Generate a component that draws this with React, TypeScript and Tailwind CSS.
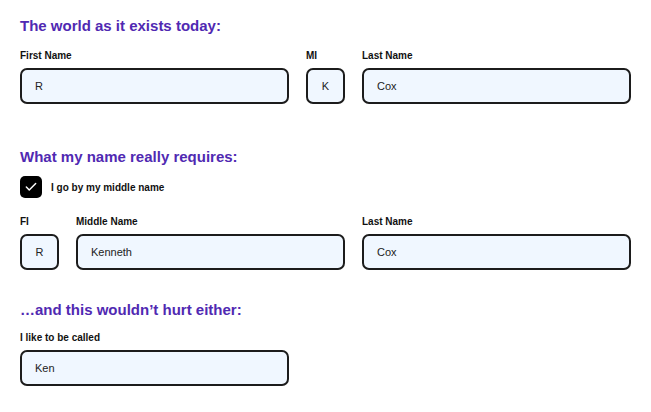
import { Check } from "lucide-react";

const font = { fontFamily: '"Liberation Sans", Arial, sans-serif' };

function Field({ label, value, className = "" }: { label: string; value: string; className?: string }) {
  return (
    <div className={`flex flex-col ${className}`}>
      <label className="text-[10px] leading-[12px] font-bold text-[#111]">{label}</label>
      <div className="mt-[6px] h-[36px] flex items-center rounded-[7px] border-2 border-[#1c1c1c] bg-[#f0f7ff] px-[13px] text-[11px] text-[#222]">
        {value}
      </div>
    </div>
  );
}

function Heading({ children, className = "" }: { children: React.ReactNode; className?: string }) {
  return <h2 className={`text-[15px] leading-[20px] font-bold text-[#5029b2] ${className}`}>{children}</h2>;
}

export default function App() {
  return (
    <div style={font} className="w-[651px] h-[412px] bg-white pl-[20px] pt-[16px]">
      <div className="w-[611px]">
        {/* Como está hoje */}
        <Heading>The world as it exists today:</Heading>
        <div className="mt-[14px] grid grid-cols-[269px_39px_269px] gap-x-[17px]">
          <Field label="First Name" value="R" />
          <Field label="MI" value="K" className="[&>div]:justify-center [&>div]:px-0" />
          <Field label="Last Name" value="Cox" />
        </div>

        {/* O que o nome exige */}
        <Heading className="mt-[43px]">What my name really requires:</Heading>
        <div className="mt-[9px] flex items-center gap-[9px]">
          <div className="w-[22px] h-[22px] rounded-[5px] bg-black flex items-center justify-center">
            <Check size={14} strokeWidth={2.5} className="text-white" />
          </div>
          <span className="text-[10px] font-bold text-[#111]">I go by my middle name</span>
        </div>
        <div className="mt-[18px] grid grid-cols-[39px_269px_269px] gap-x-[17px]">
          <Field label="FI" value="R" className="[&>div]:justify-center [&>div]:px-0" />
          <Field label="Middle Name" value="Kenneth" />
          <Field label="Last Name" value="Cox" />
        </div>

        {/* Apelido */}
        <Heading className="mt-[30px]">…and this wouldn’t hurt either:</Heading>
        <div className="mt-[12px] w-[269px]">
          <Field label="I like to be called" value="Ken" />
        </div>
      </div>
    </div>
  );
}
